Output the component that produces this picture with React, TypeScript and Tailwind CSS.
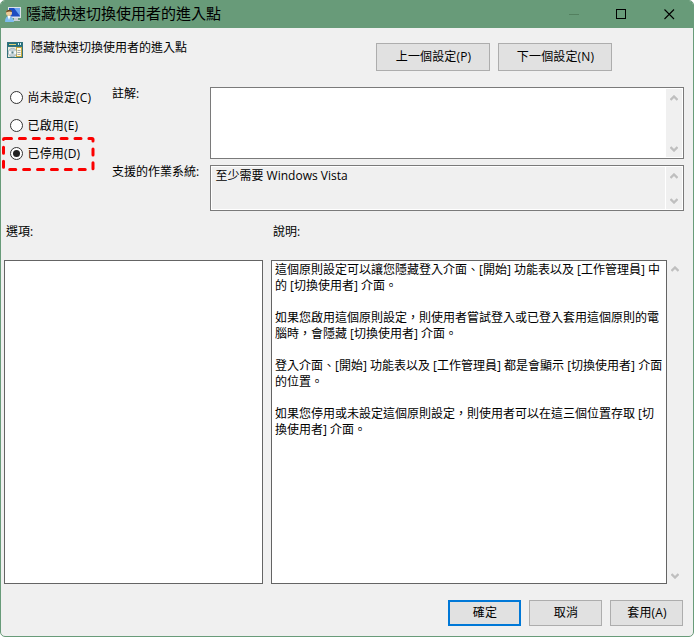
import clsx from "clsx";

const description = [
    "這個原則設定可以讓您隱藏登入介面、[開始] 功能表以及 [工作管理員] 中",
    "的 [切換使用者] 介面。",
    "",
    "如果您啟用這個原則設定，則使用者嘗試登入或已登入套用這個原則的電",
    "腦時，會隱藏 [切換使用者] 介面。",
    "",
    "登入介面、[開始] 功能表以及 [工作管理員] 都是會顯示 [切換使用者] 介面",
    "的位置。",
    "",
    "如果您停用或未設定這個原則設定，則使用者可以在這三個位置存取 [切",
    "換使用者] 介面。",
];

const states = [
    { label: "尚未設定(C)", checked: false },
    { label: "已啟用(E)", checked: false },
    { label: "已停用(D)", checked: true },
];

export default function App() {
    return (
        <div className="w-[694px] h-[637px] bg-white overflow-hidden">
            <div
                lang="zh-Hant"
                className="w-full h-full flex flex-col bg-[#f0f0f0] border border-[#689b79] rounded-[5px] overflow-hidden text-black text-[12px] leading-4 font-['Open_Sans','Noto_Sans_CJK_TC',sans-serif] whitespace-nowrap"
            >
                <TitleBar />

                {/* Policy name and navigation */}
                <div className="flex h-[59px] shrink-0">
                    <div className="w-[375px] flex pl-[6px] pt-[14px]">
                        <PolicyIcon />
                        <span className="ml-2 -mt-[2px]">隱藏快速切換使用者的進入點</span>
                    </div>
                    <div className="flex gap-2 pt-[15px]">
                        <DialogButton className="w-[114px] h-[28px]">上一個設定(P)</DialogButton>
                        <DialogButton className="w-[114px] h-[28px]">下一個設定(N)</DialogButton>
                    </div>
                </div>

                {/* State, comment and supported platforms */}
                <div className="flex h-[125px] shrink-0">
                    <div className="relative w-[111px] pl-[9px] pt-[3px] flex flex-col gap-3">
                        {states.map((state) => (
                            <Radio key={state.label} label={state.label} checked={state.checked} />
                        ))}
                        <svg className="absolute left-0 top-[48px]" width="96" height="38" fill="none">
                            <rect x="2.5" y="3.5" width="89.5" height="31" rx="1" stroke="#fb0000" strokeWidth="3" strokeLinecap="round" strokeDasharray="6 7.9" strokeDashoffset="-1" />
                        </svg>
                    </div>
                    <div className="w-[98px] flex flex-col gap-[62px]">
                        <span className="-mt-px">註解:</span>
                        <span>支援的作業系統:</span>
                    </div>
                    <div className="w-[474px] flex flex-col gap-[6px]">
                        <div className="h-[72px] shrink-0 border border-[#7a7a7a] bg-white p-px flex justify-end">
                            <ScrollBar />
                        </div>
                        <div className="h-[46px] shrink-0 border border-[#7a7a7a] bg-white p-px flex gap-px">
                            <div className="flex-1 bg-[#f0f0f0] pl-[3.5px] pt-px">至少需要 Windows Vista</div>
                            <ScrollBar />
                        </div>
                    </div>
                </div>

                <div className="flex h-[48px] shrink-0 pt-[12px] pl-[5px]">
                    <span className="w-[267px]">選項:</span>
                    <span>說明:</span>
                </div>

                {/* Options and help panes */}
                <div className="flex h-[324px] shrink-0 pl-[3px]">
                    <div className="w-[259px] bg-white border border-[#646464]" />
                    <div className="w-[396px] ml-2 bg-white border border-[#646464] pl-[3px] pt-px">
                        {description.map((line, i) => (
                            <p key={i} className="h-4">
                                {line}
                            </p>
                        ))}
                    </div>
                    <ScrollBar />
                </div>

                <div className="flex justify-end gap-2 pt-4 pr-[10px]">
                    <DialogButton primary className="w-[73px] h-[26px]">確定</DialogButton>
                    <DialogButton className="w-[73px] h-[26px]">取消</DialogButton>
                    <DialogButton className="w-[73px] h-[26px]">套用(A)</DialogButton>
                </div>
            </div>
        </div>
    );
}

function TitleBar() {
    return (
        <div className="h-[27px] shrink-0 bg-[#689b79] flex items-center pl-[4px] pr-[18px]">
            <UserIcon />
            <span className="ml-[5px] -mt-[4px] text-[15px] leading-5">隱藏快速切換使用者的進入點</span>
            <div className="ml-auto flex items-center gap-[37px]">
                <svg width="10" height="11" className="text-[#53805f]" shapeRendering="crispEdges">
                    <path d="M0 5.5h10" stroke="currentColor" />
                </svg>
                <svg width="11" height="11" fill="none" shapeRendering="crispEdges">
                    <path d="M.5 .5h9v9h-9z" stroke="#000" />
                </svg>
                <svg width="11" height="11" fill="none">
                    <path d="M.5 .5l9.500 9.500M10 .5l-9.500 9.500" stroke="#000" strokeWidth="1.1" />
                </svg>
            </div>
        </div>
    );
}

function DialogButton({ children, className, primary }: { children: string; className: string; primary?: boolean }) {
    return (
        <button
            className={clsx(
                "flex items-center justify-center bg-[#e1e1e1] tracking-[0.15px] pl-px",
                primary ? "border-2 border-[#0078d7]" : "border border-[#adadad]",
                className
            )}
        >
            {children}
        </button>
    );
}

function Radio({ label, checked }: { label: string; checked: boolean }) {
    return (
        <label className="h-4 flex items-center gap-[4.5px] tracking-[0.15px]">
            <span className="w-[13px] h-[13px] -mt-[2px] rounded-full border border-[#333] bg-white flex items-center justify-center">
                {checked && <span className="w-[7px] h-[7px] rounded-full bg-[#222]" />}
            </span>
            {label}
        </label>
    );
}

function ScrollBar() {
    return (
        <div className="w-4 bg-[#f0f0f0] flex flex-col items-center justify-between pt-[6px] pb-[5px]">
            <svg width="8" height="6" fill="none">
                <path d="M.5 5L4 1.500l3.500 3.500" stroke="#bfbfbf" strokeWidth="2.3" />
            </svg>
            <svg width="8" height="6" fill="none">
                <path d="M.5 1L4 4.500l3.500-3.500" stroke="#bfbfbf" strokeWidth="2.3" />
            </svg>
        </div>
    );
}

function UserIcon() {
    return (
        <svg width="16" height="16" viewBox="0 0 16 16">
            <path d="M3 0h13v11H3z" fill="#dce2ea" />
            <path d="M4 1h11v8.500H4z" fill="#1c4cc0" />
            <path d="M9 1h6v8z" fill="#6aa4f0" />
            <path d="M9 11h4v2H9zM8 13h7v1H8z" fill="#c9ced6" />
            <circle cx="4" cy="6" r="3" fill="#f0cb96" />
            <path d="M1 5.500C1 1.800 7 1.800 7 5 4.800 4 3 4.400 1 5.500z" fill="#6b4a24" />
            <path d="M0 15c0-4 1.500-6 4-6s4.500 2 5 6z" fill="#7dbcf0" />
            <path d="M2.500 9L4 13l1.500-4z" fill="#fff" />
        </svg>
    );
}

function PolicyIcon() {
    return (
        <svg width="16" height="16" viewBox="0 0 16 16">
            <path d="M0 0h16v16H0z" fill="#33727c" />
            <path d="M1 1h14v3H1z" fill="#23707e" />
            <path d="M2 2h7v1H2z" fill="#e5d375" />
            <path d="M11 1h1v2h-1zM13 1h1v2h-1z" fill="#d9efef" />
            <path d="M1 5h14v10H1z" fill="#eceadb" />
            <path d="M9 5h6v10H9z" fill="#c9a83c" />
            <path d="M10 6h4v8h-4z" fill="#fff9e4" />
            <path d="M10.500 8h3v1h-3zM10.500 10h3v1h-3zM10.500 12h3v1h-3z" fill="#a5adb0" />
            <circle cx="5.500" cy="10.500" r="4.200" fill="#c5d2d8" stroke="#8fa3ab" strokeWidth=".6" />
            <path d="M5.500 10.500L2 8.500v4zM5.500 10.500l3.500-2v4z" fill="#f4f8f8" />
            <circle cx="5.500" cy="10.500" r="1.100" fill="#55808a" />
        </svg>
    );
}
